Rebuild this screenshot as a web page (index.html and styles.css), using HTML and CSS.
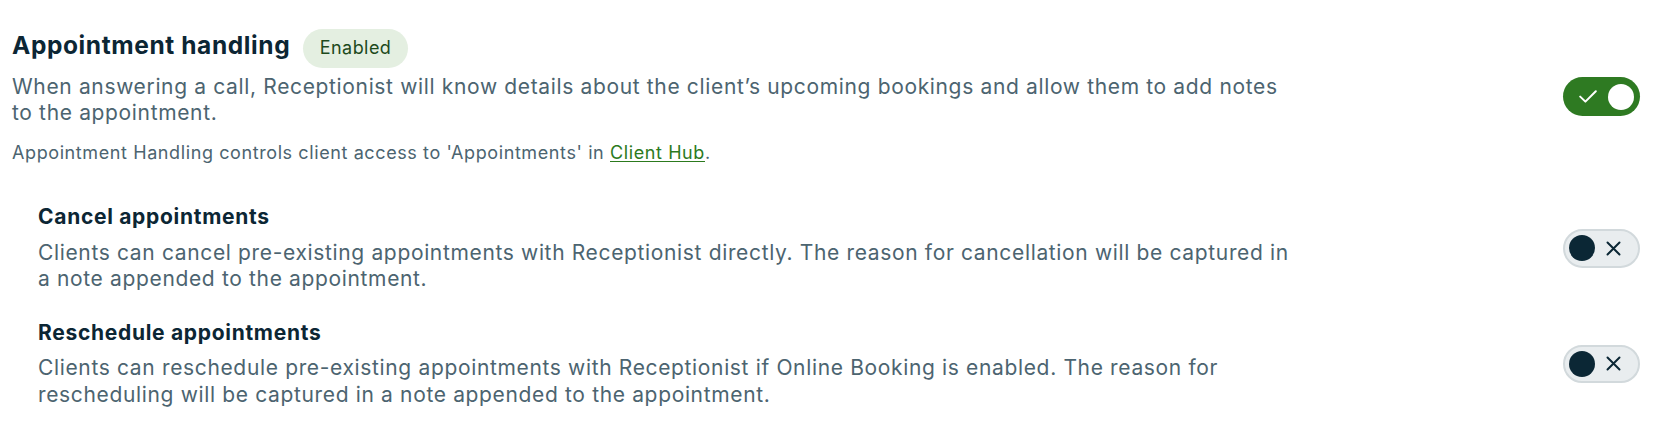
FILE: index.html
```html
<!DOCTYPE html>
<html lang="en">
<head>
<meta charset="utf-8">
<title>Appointment handling</title>
<link rel="stylesheet" href="styles.css">
</head>
<body>
<main class="settings">
  <section class="row main-row">
    <div class="text main-text">
      <div class="header">
        <h2 class="title">Appointment handling</h2>
        <span class="badge">Enabled</span>
      </div>
      <p class="desc">When answering a call, Receptionist will know details about the client’s upcoming bookings and allow them to add notes to the appointment.</p>
      <p class="note">Appointment Handling controls client access to 'Appointments' in <a class="link" href="#">Client Hub</a>.</p>
    </div>
    <div class="toggle on" role="switch" aria-checked="true">
      <svg class="check" width="18" height="13" viewBox="0 0 18 13" aria-hidden="true"><path d="M1.2 6.6 L6.4 11.6 L16.8 1.2" fill="none" stroke="#fff" stroke-width="2" stroke-linecap="round" stroke-linejoin="round"/></svg>
      <span class="knob"></span>
    </div>
  </section>

  <div class="sub-list">
    <section class="row sub-row">
      <div class="text sub-text">
        <h3 class="sub-title">Cancel appointments</h3>
        <p class="desc">Clients can cancel pre-existing appointments with Receptionist directly. The reason for cancellation will be captured in a note appended to the appointment.</p>
      </div>
      <div class="toggle off" role="switch" aria-checked="false">
        <span class="knob"></span>
        <svg class="cross" width="15" height="15" viewBox="0 0 15 15" aria-hidden="true"><path d="M1.5 1.5 L13.5 13.5 M13.5 1.5 L1.5 13.5" fill="none" stroke="#0b2735" stroke-width="2" stroke-linecap="round"/></svg>
      </div>
    </section>
    <section class="row sub-row">
      <div class="text sub-text">
        <h3 class="sub-title">Reschedule appointments</h3>
        <p class="desc">Clients can reschedule pre-existing appointments with Receptionist if Online Booking is enabled. The reason for rescheduling will be captured in a note appended to the appointment.</p>
      </div>
      <div class="toggle off" role="switch" aria-checked="false">
        <span class="knob"></span>
        <svg class="cross" width="15" height="15" viewBox="0 0 15 15" aria-hidden="true"><path d="M1.5 1.5 L13.5 13.5 M13.5 1.5 L1.5 13.5" fill="none" stroke="#0b2735" stroke-width="2" stroke-linecap="round"/></svg>
      </div>
    </section>
  </div>
</main>
</body>
</html>
```

FILE: styles.css
```css
* { box-sizing: border-box; }

html, body {
  margin: 0;
  padding: 0;
  background: #ffffff;
}

body {
  font-family: Inter, "Noto Sans", "Liberation Sans", sans-serif;
  color: #0c2634;
}

.settings {
  padding: 29px 22px 0 12px;
}

.row {
  display: flex;
  justify-content: space-between;
  align-items: center;
}

.text {
  flex: 0 1 auto;
}

.main-text {
  max-width: 1286px;
}

.sub-text {
  max-width: 1260px;
}

.header {
  display: flex;
  align-items: baseline;
  gap: 13px;
}

.title {
  margin: 0;
  font-size: 24.5px;
  line-height: 32px;
  font-weight: 700;
  color: #0c2634;
  letter-spacing: 0.6px;
}

.badge {
  display: inline-block;
  padding: 7.4px 16.5px 7.3px;
  font-size: 18px;
  line-height: 24px;
  font-weight: 400;
  letter-spacing: 0.45px;
  color: #1d4a1c;
  background: #e4efe1;
  border-radius: 20px;
}

.desc {
  margin: 0;
  font-size: 21px;
  line-height: 26.67px;
  letter-spacing: 0.65px;
  color: #4c6470;
}

.main-text .desc {
  margin-top: 6px;
}

.note {
  margin: 15px 0 0;
  font-size: 18px;
  line-height: 22px;
  letter-spacing: 0.6px;
  color: #4c6470;
}

.link {
  color: #2c7a1e;
  text-decoration: underline;
  text-underline-offset: 2px;
}

.sub-list {
  display: flex;
  flex-direction: column;
  gap: 26.7px;
  margin-top: 40px;
  padding-left: 26px;
}

.sub-title {
  margin: 0;
  font-size: 21px;
  line-height: 26px;
  font-weight: 700;
  letter-spacing: 0.7px;
  color: #0c2634;
}

.sub-text .desc {
  margin-top: 9.5px;
}

.toggle {
  flex: 0 0 auto;
  width: 77px;
  height: 38.7px;
  border-radius: 20px;
  display: flex;
  align-items: center;
}

.toggle .knob {
  display: block;
  width: 26px;
  height: 26px;
  border-radius: 50%;
}

.toggle.on {
  background: #2e7a22;
  padding-left: 16px;
  gap: 10.5px;
}

.toggle.on .knob {
  background: #ffffff;
}

.toggle.off {
  background: #e9edef;
  border: 2px solid #d2d9dc;
  padding-left: 4.3px;
  gap: 10.7px;
}

.toggle.off .knob {
  background: #0b2735;
}

.check, .cross {
  display: block;
  flex: 0 0 auto;
}
```
